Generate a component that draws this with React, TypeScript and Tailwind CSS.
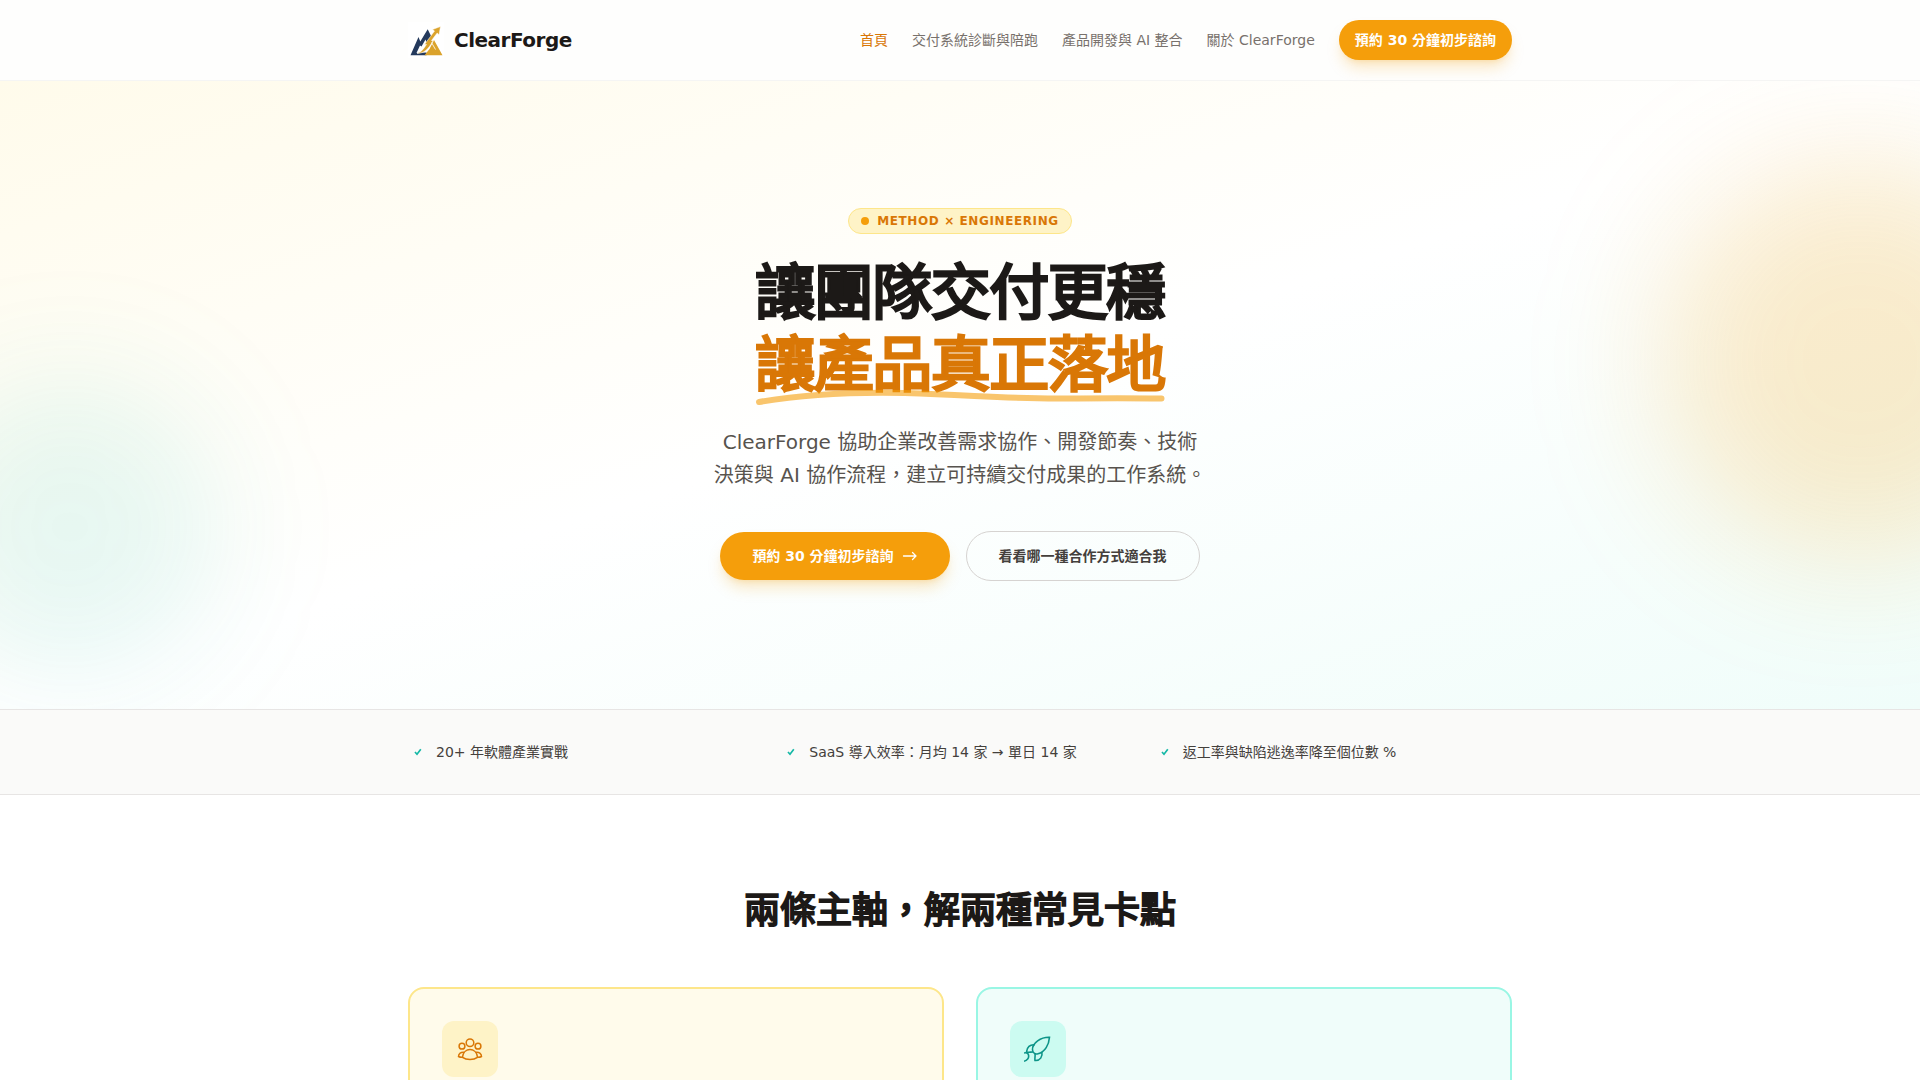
import React from "react";

const SANS = "font-['DejaVu_Sans','Noto_Sans_CJK_TC',sans-serif]";

function Logo() {
  return (
    <svg viewBox="0 0 36 36" className="size-9" aria-hidden="true">
      <rect width="36" height="36" fill="#fff" />
      <path d="M2.500 33.300 L10.500 15 L12.300 19.500 L19.700 7.300 L23.300 14.500 L18.500 20.500 L17.500 17.500 L13.500 24.500 L12 23.500 L8.500 31 L18.500 30.500 V33.300 Z" fill="#24395c" />
      <path d="M34.500 33.300 H16.500 L21.500 27 L26 18 Z" fill="#dba32c" />
      <path d="M9 31.500 C14 30 16 26 18.500 22.500 L16.500 22.500 L26.500 9 L24.500 7.500 L32.500 4.500 L31 12.800 L29.200 11 L23.500 18.500 L25 19 C20.500 27 16 31.500 9 31.500 Z" fill="#dba32c" stroke="#fff" strokeWidth="0.5" />
      <path d="M23.500 20.500 L27.500 27.500" stroke="#fff" strokeWidth="0.8" />
    </svg>
  );
}

function CheckIcon() {
  return (
    <svg viewBox="0 0 20 20" className="size-5 shrink-0" fill="none" stroke="#14b8a6" strokeWidth="1.700" aria-hidden="true">
      <path d="M7 10 L9 12.200 L12.800 7.300" />
    </svg>
  );
}

function ArrowIcon() {
  return (
    <svg viewBox="0 0 16 16" className="size-4" fill="none" stroke="currentColor" strokeWidth="1.300" strokeLinecap="round" strokeLinejoin="round" aria-hidden="true">
      <path d="M1.500 8 H14 M10.500 4.500 L14 8 L10.500 11.500" />
    </svg>
  );
}

function TeamIcon() {
  return (
    <svg viewBox="0 0 28 28" className="size-7" fill="none" stroke="currentColor" strokeWidth="1.500" aria-hidden="true">
      <circle cx="14" cy="7.700" r="3.800" />
      <circle cx="6" cy="11.200" r="2.900" />
      <circle cx="22" cy="11.200" r="2.900" />
      <path d="M6.500 22.300 C7.500 12 20.500 12 21.500 22.300 C17.500 25.300 10.500 25.300 6.500 22.300 Z" />
      <path d="M8.300 17.300 C5 16.800 2.500 18.500 2.500 21.500 C3.800 22.200 5 22.400 6.500 22.300" />
      <path d="M19.700 17.300 C23 16.800 25.500 18.500 25.500 21.500 C24.200 22.200 23 22.400 21.500 22.300" />
    </svg>
  );
}

function RocketIcon() {
  return (
    <svg viewBox="0 0 28 28" className="size-7" fill="none" stroke="currentColor" strokeWidth="1.600" aria-hidden="true">
      <path d="M25.500 2.300 C17 2 8 8 8.500 15 C9 18.500 11.500 19.500 14 18.800 C21 17 25 9.500 25.500 2.300 Z" />
      <path d="M11 9.800 C6 9 2.800 12.500 2.500 17 C4.500 17.500 6.500 17 9 17" />
      <path d="M17.800 17 C19 21.500 16 26 11 25.500 C10.500 23 11.500 21 11 19" />
      <path d="M0 18 C2 17.500 4 18 4.500 20 C5.300 23 3 25.500 0 26.300" />
    </svg>
  );
}

const facts = [
  "20+ 年軟體產業實戰",
  "SaaS 導入效率：月均 14 家 → 單日 14 家",
  "返工率與缺陷逃逸率降至個位數 %",
];

export default function App() {
  return (
    <div lang="zh-Hant" className={`h-screen overflow-hidden bg-white text-[#1c1917] ${SANS}`}>
      <header className="relative z-10 -mb-px border-b border-[#f5f5f4] bg-[#fefefd]">
        <div className="mx-auto flex h-20 max-w-6xl items-center justify-between px-6">
          <a href="#" className="flex items-center gap-2.5 text-xl font-bold tracking-tight">
            <Logo />
            ClearForge
          </a>
          <nav className="flex items-center gap-6 text-sm text-[#78716c]">
            <a href="#" className="text-[#d97706]">首頁</a>
            <a href="#delivery">交付系統診斷與陪跑</a>
            <a href="#product">產品開發與 AI 整合</a>
            <a href="#about">關於 ClearForge</a>
            <a href="#contact" className="rounded-full bg-[#f59e0b] px-4 py-2.5 font-semibold text-white shadow-lg shadow-[#f59e0b]/25">
              預約 30 分鐘初步諮詢
            </a>
          </nav>
        </div>
      </header>

      <main>
        <section className="relative overflow-hidden bg-[linear-gradient(to_bottom_right,#fffbeb_0%,#ffffff_50%,#f0fdfa_100%)] px-6 py-32">
          <div className="absolute top-20 -right-[140px] size-[400px] rounded-full bg-[#f59e0b]/20 blur-[64px]" />
          <div className="absolute bottom-8 -left-20 size-[300px] rounded-full bg-[#14b8a6]/10 blur-[60px]" />
          <div className="relative flex flex-col items-center text-center">
            <span className="flex items-center gap-2 rounded-full border border-[#fde68a] bg-[#fef3c7] px-3 py-1 text-xs font-semibold tracking-wider text-[#d97706]">
              <span className="size-2 rounded-full bg-[#f59e0b]" />
              METHOD × ENGINEERING
            </span>
            <h1 className="mt-[23px] text-6xl leading-[72px] font-normal tracking-tight [-webkit-text-stroke:3px_currentColor]">
              讓團隊交付更穩
              <br />
              <span className="relative inline-block text-[#d97706]">
                讓產品真正落地
                <svg viewBox="0 0 410 16" className="absolute -bottom-1.5 left-0 h-4 w-full overflow-visible" fill="none" preserveAspectRatio="none" aria-hidden="true">
                  <path d="M4 11 C50 3 100 1 150 2 C220 4 250 8 310 7.500 C350 7 380 7 407 7.500" stroke="#f59e0b" strokeOpacity="0.6" strokeWidth="6" strokeLinecap="round" />
                </svg>
              </span>
            </h1>
            <p className="mt-[25px] max-w-lg text-xl leading-relaxed text-[#57534e]">
              ClearForge 協助企業改善需求協作、開發節奏、技術
              <br />
              決策與 AI 協作流程，建立可持續交付成果的工作系統。
            </p>
            <div className="mt-10 flex items-center gap-4 text-sm font-semibold">
              <a href="#contact" className="flex h-12 items-center gap-2 rounded-full bg-[#f59e0b] px-8 text-white shadow-lg shadow-[#f59e0b]/25">
                預約 30 分鐘初步諮詢
                <ArrowIcon />
              </a>
              <a href="#services" className="flex h-[50px] items-center rounded-full border border-[#d6d3d1] px-8 text-[#44403c]">
                看看哪一種合作方式適合我
              </a>
            </div>
          </div>
        </section>

        <section className="border-y border-[#e7e5e4] bg-[#fafaf9]">
          <ul className="mx-auto grid max-w-6xl grid-cols-3 gap-4 px-6 py-8 text-sm text-[#44403c]">
            {facts.map((fact) => (
              <li key={fact} className="flex items-center gap-2">
                <CheckIcon />
                {fact}
              </li>
            ))}
          </ul>
        </section>

        <section id="services" className="mx-auto max-w-6xl px-6 py-24">
          <h2 className="text-center text-4xl font-normal [-webkit-text-stroke:2px_currentColor]">兩條主軸，解兩種常見卡點</h2>
          <div className="mt-14 grid grid-cols-2 gap-8">
            <article className="h-96 rounded-2xl border-2 border-[#fde68a] bg-[#fffbeb] p-8">
              <div className="flex size-14 items-center justify-center rounded-xl bg-[#fef3c7] text-[#d97706]">
                <TeamIcon />
              </div>
            </article>
            <article className="h-96 rounded-2xl border-2 border-[#99f6e4] bg-[#f0fdfa] p-8">
              <div className="flex size-14 items-center justify-center rounded-xl bg-[#ccfbf1] text-[#0d9488]">
                <RocketIcon />
              </div>
            </article>
          </div>
        </section>
      </main>
    </div>
  );
}
